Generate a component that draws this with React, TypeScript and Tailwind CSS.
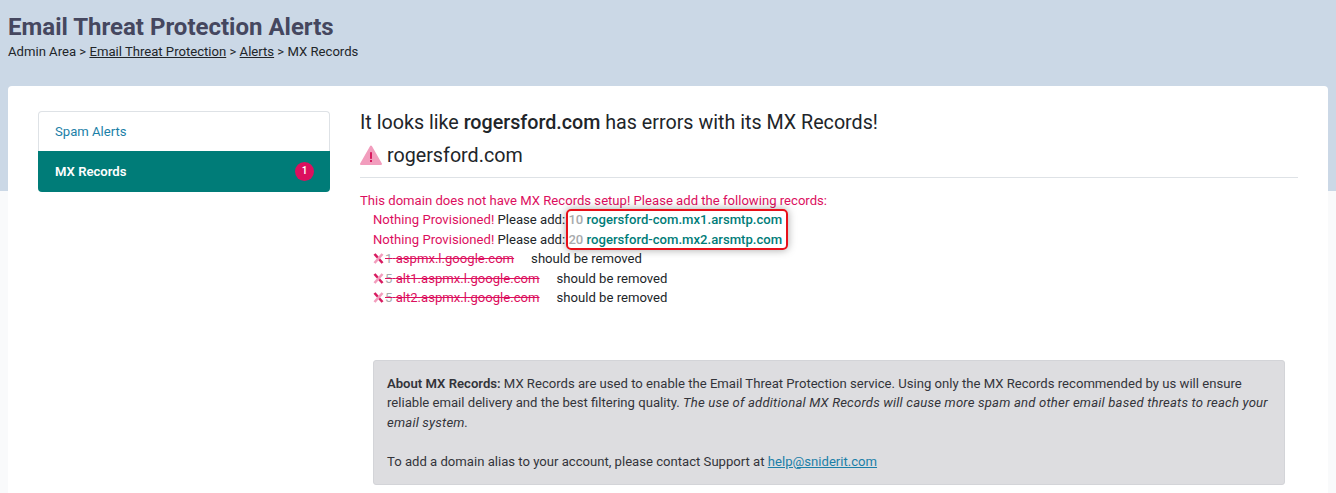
const font = 'font-["Roboto",sans-serif]';

function WarningIcon() {
    return (
        <svg className="mb-[2px] mr-[5px] h-[21px] w-[22px] shrink-0" viewBox="0 0 22 21">
            <path d="M11 1.5 L21 19 L1 19 Z" fill="#f29dbd" stroke="#f29dbd" strokeWidth="2" strokeLinejoin="round" />
            <rect x="10" y="7" width="2" height="7" rx="0.8" fill="#d81b60" />
            <rect x="10" y="15" width="2" height="2" fill="#d81b60" />
        </svg>
    );
}

function CrossIcon() {
    return (
        <svg className="mr-[1px] h-[11px] w-[11px] shrink-0" viewBox="0 0 11 11">
            <path d="M1.5 1 L9.5 10" stroke="#d81b60" strokeWidth="2.6" />
            <path d="M9.5 1 L1.5 10" stroke="#f29dbd" strokeWidth="2.6" />
        </svg>
    );
}

const provisioned = ['10 rogersford-com.mx1.arsmtp.com', '20 rogersford-com.mx2.arsmtp.com'];

const removals = [
    { priority: '1', host: 'aspmx.l.google.com' },
    { priority: '5', host: 'alt1.aspmx.l.google.com' },
    { priority: '5', host: 'alt2.aspmx.l.google.com' },
];

export default function App() {
    return (
        <div className={`${font} min-h-[493px] overflow-hidden bg-[#f9fafb] text-[13.12px] text-[#212529]`}>
            <header className="h-[191px] bg-[#cbd8e6] pl-2 pt-[13px]">
                <h1 className="text-[24px] leading-[29px] font-bold text-[#45475f]">Email Threat Protection Alerts</h1>
                <p className="leading-[19px]">
                    Admin Area &gt; <a className="underline">Email Threat Protection</a> &gt; <a className="underline">Alerts</a> &gt; MX Records
                </p>
            </header>

            <main className="mx-2 mt-[-105px] flex h-[420px] gap-[30px] rounded-t-[4px] bg-white pl-[30px] pr-[30px] pt-[25px]">
                <nav className="w-[292px] shrink-0">
                    <a className="flex h-[40px] items-center rounded-t-[4px] border border-b-0 border-[#dee2e6] pl-4 text-[#1b7fa8]">Spam Alerts</a>
                    <a className="flex h-[41px] items-center justify-between rounded-b-[4px] bg-[#007c78] pl-[17px] pr-[16px] font-semibold text-white">
                        MX Records
                        <span className="flex h-[19px] w-[19px] items-center justify-center rounded-full bg-[#dc0f5e] pb-[2px] text-[10px]">1</span>
                    </a>
                </nav>

                <section className="min-w-0 flex-1">
                    <h2 className="text-[19.7px] leading-[24px] font-normal text-[#212529]">
                        It looks like <span className="font-medium">rogersford.com</span> has errors with its MX Records!
                    </h2>
                    <div className="mt-[10px] flex h-[22px] items-center text-[19.7px]">
                        <WarningIcon />
                        rogersford.com
                    </div>
                    <hr className="mt-[10px] border-[#dee2e6]" />

                    <p className="mt-[15px] leading-[15px] text-[#dc0f5e]">This domain does not have MX Records setup! Please add the following records:</p>
                    <div className="mt-[2px] pl-[13px] leading-[19.5px]">
                        <div className="relative">
                            {provisioned.map((record) => (
                                <div key={record}>
                                    <span className="text-[#dc0f5e]">Nothing Provisioned!</span> Please add:{' '}
                                    <span className="font-medium text-[#a8aaad]">{record.slice(0, 2)}</span>{' '}
                                    <span className="font-medium text-[#007c78]">{record.slice(3)}</span>
                                </div>
                            ))}
                            <div className="absolute left-[193px] top-[-1px] h-[41px] w-[222px] rounded-[5px] border-2 border-[#e8101a] shadow-[0_0_8px_rgba(0,0,0,0.35)]" />
                        </div>
                        {removals.map((item) => (
                            <div className="flex items-center" key={item.host}>
                                <CrossIcon />
                                <span className="text-[#dc0f5e] line-through">
                                    <span className="text-[#a8aaad]">{item.priority}</span> {item.host}
                                </span>
                                <span className="ml-[17px]">should be removed</span>
                            </div>
                        ))}
                    </div>

                    <div className="mx-[13px] mt-[52px] h-[125px] rounded-[3px] border border-[#d3d4d8] bg-[#dddde0] px-[13px] pt-[13px] leading-[19.5px] text-[#33343a]">
                        <strong className="font-semibold">About MX Records:</strong> MX Records are used to enable the Email Threat Protection service. Using only the MX Records recommended by us will ensure reliable email delivery and the best filtering quality.{' '}
                        <em className="tracking-[0.19px]">The use of additional MX Records will cause more spam and other email based threats to reach your email system.</em>
                        <br />
                        <br />
                        To add a domain alias to your account, please contact Support at <a className="text-[#1b7fa8] underline">help@sniderit.com</a>
                    </div>
                </section>
            </main>
        </div>
    );
}
